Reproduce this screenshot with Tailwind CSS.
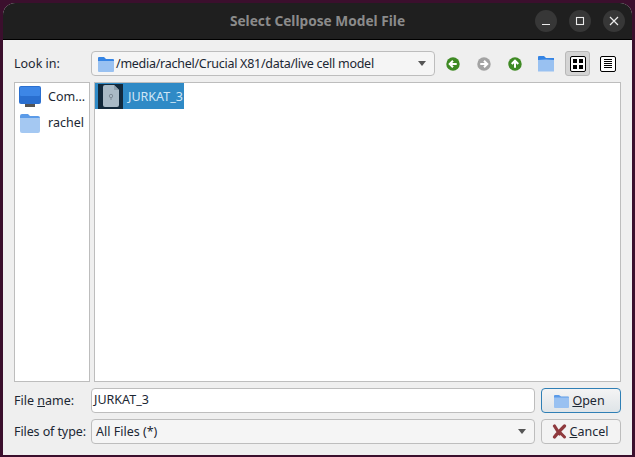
<!DOCTYPE html>
<html lang="en">
<head>
  <meta charset="UTF-8">
  <title>Select Cellpose Model File</title>
  <script src="https://cdn.jsdelivr.net/npm/@tailwindcss/browser@4"></script>
</head>
<body class="w-[635px] h-[457px] overflow-hidden bg-[#3b0f2d] font-['Noto_Sans',sans-serif] text-[12.5px] text-[#1c2733]">

  <div class="w-[635px] h-[457px] pt-[3px] pl-[3px] pr-[3px] pb-[2px]">
    <div class="w-full h-full flex flex-col rounded-t-[12px] overflow-hidden bg-[#efefef]">

      <!-- Title bar -->
      <div class="relative h-[37px] shrink-0 flex items-center justify-center bg-[#1f1f1f] border-b border-black">
        <span class="text-[13.7px] font-bold text-[#8b8b8b]">Select Cellpose Model File</span>
        <div class="absolute right-[7px] top-[7px] flex gap-[12px]">
          <div class="w-[22px] h-[22px] rounded-full bg-[#373737] flex items-center justify-center">
            <svg width="10" height="10" viewBox="0 0 10 10"><path d="M1 8.500h8" stroke="#ececec" stroke-width="1.200"/></svg>
          </div>
          <div class="w-[22px] h-[22px] rounded-full bg-[#373737] flex items-center justify-center">
            <svg width="10" height="10" viewBox="0 0 10 10"><rect x="1.500" y="1.500" width="7" height="7" fill="none" stroke="#ececec" stroke-width="1.100"/></svg>
          </div>
          <div class="w-[22px] h-[22px] rounded-full bg-[#373737] flex items-center justify-center">
            <svg width="10" height="10" viewBox="0 0 10 10"><path d="M1 1l8 8M9 1l-8 8" stroke="#ececec" stroke-width="1.200"/></svg>
          </div>
        </div>
      </div>

      <!-- Dialog body -->
      <div class="flex-1 flex flex-col pl-[11px] pr-[11px] pt-[11px]">

        <!-- Look in row -->
        <div class="flex items-center h-[25px]">
          <span class="w-[77px] shrink-0 pt-[2px]">Look in:</span>
          <div class="w-[344px] h-[25px] shrink-0 flex items-center pl-[5px] pr-[8px] rounded-[4px] border border-[#bdbdbd] bg-[#f5f5f5]">
            <svg class="shrink-0" width="18" height="18" viewBox="0 0 18 18"><path d="M1 3a1 1 0 0 1 1-1h5l2 2h7a1 1 0 0 1 1 1v2H1z" fill="#3584e4"/><path d="M1 6h16v10a1 1 0 0 1-1 1H2a1 1 0 0 1-1-1z" fill="#99c1f1"/></svg>
            <span class="ml-[1px] pt-[2px] flex-1 whitespace-nowrap tracking-[-0.27px]">/media/rachel/Crucial X81/data/live cell model</span>
            <svg width="8" height="5" viewBox="0 0 8 5"><path d="M0 0h8L4 5z" fill="#555"/></svg>
          </div>
          <div class="flex items-center ml-[11px]">
            <svg width="14" height="14" viewBox="0 0 15 15"><circle cx="7.500" cy="7.500" r="7.200" fill="#3f8a24"/><path d="M11.500 7.500H5M7.500 4l-3.500 3.500L7.500 11" fill="none" stroke="#fff" stroke-width="2.200"/></svg>
            <svg class="ml-[17px]" width="14" height="14" viewBox="0 0 15 15"><circle cx="7.500" cy="7.500" r="7.200" fill="#a3a3a3"/><path d="M3.500 7.500H10M7.500 4l3.500 3.500L7.500 11" fill="none" stroke="#fff" stroke-width="2.200"/></svg>
            <svg class="ml-[17px]" width="14" height="14" viewBox="0 0 15 15"><circle cx="7.500" cy="7.500" r="7.200" fill="#3f8a24"/><path d="M7.500 11.500V5M4 7.500l3.500-3.500L11 7.500" fill="none" stroke="#fff" stroke-width="2.200"/></svg>
            <svg class="ml-[15px]" width="18" height="18" viewBox="0 0 18 18"><path d="M1 2a1 1 0 0 1 1-1h5l2 2h8v3H1z" fill="#3584e4"/><path d="M1 5l8-.5L17 5v11.500H1z" fill="#99c1f1"/></svg>
            <div class="ml-[10px] w-[25px] h-[25px] rounded-[3px] bg-[#d4d4d4] border border-[#b8b8b8] flex items-center justify-center">
              <div class="w-[16px] h-[16px] rounded-[2px] border border-black bg-white grid grid-cols-2 gap-[2px] p-[2px]">
                <span class="bg-black"></span><span class="bg-black"></span><span class="bg-black"></span><span class="bg-black"></span>
              </div>
            </div>
            <div class="ml-[5px] w-[25px] h-[25px] flex items-center justify-center">
              <div class="w-[16px] h-[16px] rounded-[2px] border border-black bg-white flex flex-col justify-center gap-[1px] px-[3px]">
                <span class="h-px bg-black"></span><span class="h-px bg-black"></span><span class="h-px bg-black"></span><span class="h-px bg-black"></span><span class="h-px bg-black"></span>
              </div>
            </div>
          </div>
        </div>

        <!-- Sidebar and file list -->
        <div class="flex h-[300px] mt-[6px] shrink-0">
          <div class="w-[76px] shrink-0 border border-[#bdbdbd] bg-white pt-[2px] pl-[4px]">
            <div class="flex items-center h-[24px]">
              <svg class="shrink-0" width="22" height="22" viewBox="0 0 22 22"><rect x="6" y="17" width="10" height="4" fill="#555"/><rect x="0" y="0" width="22" height="18" rx="2" fill="#2a6fd0"/><rect x="1" y="1" width="20" height="9" rx="1" fill="#3d86e6"/></svg>
              <span class="ml-[7px] whitespace-nowrap">Com...</span>
            </div>
            <div class="flex items-center h-[24px] mt-[2px]">
              <svg class="shrink-0" width="22" height="22" viewBox="0 0 22 22"><path d="M1 4a2 2 0 0 1 2-2h6l2 2h8a2 2 0 0 1 2 2v2H1z" fill="#5b9be8"/><path d="M1 6h20v13a2 2 0 0 1-2 2H3a2 2 0 0 1-2-2z" fill="#a4c8f2"/></svg>
              <span class="ml-[7px]">rachel</span>
            </div>
          </div>
          <div class="w-[527px] shrink-0 ml-[4px] border border-[#bdbdbd] bg-white">
            <div class="inline-flex items-center h-[26px] bg-[#2f8ac6] pl-[3px] pr-[1px]">
              <div class="w-[25px] h-[25px] bg-[#12293b] flex items-center justify-center">
                <svg width="18" height="24" viewBox="0 0 18 24"><path d="M1 3a2 2 0 0 1 2-2h9l5 5v15a2 2 0 0 1-2 2H3a2 2 0 0 1-2-2z" fill="#a9bac6"/><path d="M12 1l5 5h-5z" fill="#8ea0ad"/><circle cx="9" cy="12" r="1.700" fill="none" stroke="#7d8c98"/><path d="M9 14v2" stroke="#7d8c98"/></svg>
              </div>
              <span class="ml-[5px] pt-[2px] text-[#cfe6f6]">JURKAT_3</span>
            </div>
          </div>
        </div>

        <!-- File name row -->
        <div class="flex items-center h-[25px] mt-[6px]">
          <span class="w-[77px] shrink-0 pt-[2px]">File <span class="underline">n</span>ame:</span>
          <div class="w-[444px] h-[25px] shrink-0 flex items-center pl-[2px] rounded-[4px] border border-[#bdbdbd] bg-white">JURKAT_3</div>
          <button class="ml-[6px] w-[80px] h-[25px] shrink-0 flex items-center justify-center pr-[3px] rounded-[4px] border border-[#2f7fb5] bg-gradient-to-b from-[#f4f4f4] to-[#dfe4e8]">
            <svg width="15" height="14" viewBox="0 0 15 14"><path d="M0 2a1 1 0 0 1 1-1h4l2 1.500h7a1 1 0 0 1 1 1V5H0z" fill="#5b9be8"/><path d="M0 3.500h15V13a1 1 0 0 1-1 1H1a1 1 0 0 1-1-1z" fill="#99c1f1"/></svg>
            <span class="ml-[3px] pt-[2px]"><span class="underline">O</span>pen</span>
          </button>
        </div>

        <!-- Files of type row -->
        <div class="flex items-center h-[25px] mt-[6px]">
          <span class="w-[77px] shrink-0 pt-[2px] whitespace-nowrap tracking-[-0.1px]">Files of type:</span>
          <div class="w-[444px] h-[25px] shrink-0 flex items-center pl-[4px] pr-[8px] rounded-[4px] border border-[#bdbdbd] bg-[#f5f5f5]">
            <span class="flex-1 pt-[2px]">All Files (*)</span>
            <svg width="8" height="5" viewBox="0 0 8 5"><path d="M0 0h8L4 5z" fill="#555"/></svg>
          </div>
          <button class="ml-[6px] w-[80px] h-[25px] shrink-0 flex items-center justify-center pr-[2px] rounded-[4px] border border-[#bdbdbd] bg-[#f3f3f3]">
            <svg width="15" height="15" viewBox="0 0 15 15"><path d="M2.500 2l5 8M12.500 2c-3 3-7 7-10 11" fill="none" stroke="#8f3a3e" stroke-width="3.200" stroke-linecap="round"/><path d="M7.500 8l5 5" stroke="#8f3a3e" stroke-width="3" stroke-linecap="round"/></svg>
            <span class="ml-[3px] pt-[2px]"><span class="underline">C</span>ancel</span>
          </button>
        </div>
      </div>
    </div>
  </div>

</body>
</html>
